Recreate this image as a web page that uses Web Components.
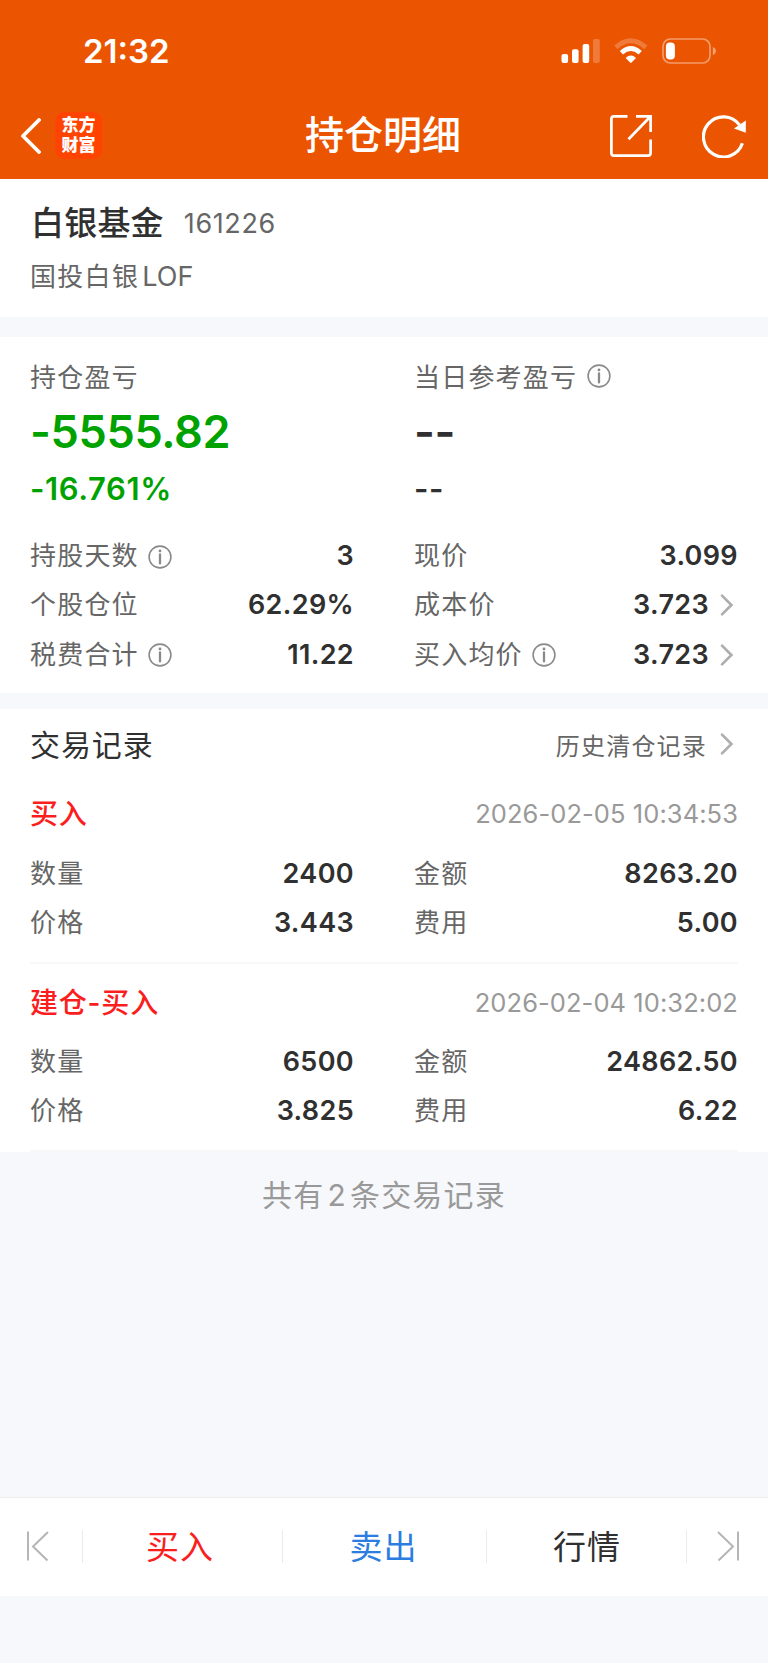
<!DOCTYPE html>
<html lang="zh-CN">
<head>
<meta charset="utf-8">
<title>持仓明细</title>
<style>
    html, body {
        margin: 0;
        height: 100%;
    }

    body {
        background: #f6f8fb;
        color: #303030;
        font-family: Inter, "Noto Sans CJK SC", sans-serif;
        overflow: hidden;
    }
</style>
</head>
<body>
<position-page></position-page>

<script>
class StatusBar extends HTMLElement {
    constructor() {
        super();
        this.attachShadow({ mode: 'open' });
    }

    connectedCallback() {
        this.shadowRoot.innerHTML = `
            <style>
                :host {
                    display: flex;
                    align-items: center;
                    justify-content: space-between;
                    height: 102px;
                    padding: 0 51px 0 83px;
                    color: #fff;
                }

                .time {
                    font-size: 33px;
                    font-weight: 600;
                }

                svg { display: block; }
            </style>
            <span class="time"><slot></slot></span>
            <svg width="156" height="30" viewBox="0 0 156 30" fill="#fff">
                <rect x="0.5" y="18" width="6.6" height="9" rx="2"/>
                <rect x="11" y="13.3" width="6.6" height="13.7" rx="2"/>
                <rect x="21.6" y="8" width="6.6" height="19" rx="2"/>
                <rect x="32" y="3" width="6.8" height="24" rx="2" opacity=".22"/>
                <path d="M54.8 11.4Q69.8 -1.8 84.8 11.4" fill="none" stroke="#fff" stroke-width="4.8" opacity=".22"/>
                <path d="M60.4 16.8Q69.8 8.4 79.2 16.8" fill="none" stroke="#fff" stroke-width="4.8"/>
                <path d="M64.6 22Q69.8 17.2 75 22L70.5 26.6Q69.8 27.3 69.1 26.6Z"/>
                <rect x="102" y="3" width="47" height="24" rx="7.5" fill="none" stroke="#fff" stroke-width="1.7" opacity=".42"/>
                <rect x="104.9" y="6.6" width="9" height="17" rx="4"/>
                <path d="M151.8 11Q154.9 12 154.9 15T151.8 19Z" opacity=".42"/>
            </svg>
        `;
    }
}

class NavBar extends HTMLElement {
    constructor() {
        super();
        this.attachShadow({ mode: 'open' });
    }

    connectedCallback() {
        this.shadowRoot.innerHTML = `
            <style>
                :host {
                    display: grid;
                    grid-template-columns: 1fr auto 1fr;
                    align-items: center;
                    height: 65px;
                    padding: 0 22px 8px 20px;
                    color: #fff;
                }

                .left {
                    display: flex;
                    align-items: center;
                    gap: 14px;
                    padding-top: 2px;
                }

                .logo {
                    display: flex;
                    flex-direction: column;
                    align-items: center;
                    justify-content: center;
                    width: 47px;
                    height: 47px;
                    border-radius: 9px;
                    background: #ff4300;
                    font-size: 17px;
                    font-weight: 900;
                    line-height: 19.5px;
                }

                h1 {
                    margin: 0;
                    font-size: 39px;
                    font-weight: 500;
                    line-height: 60px;
                }

                .right {
                    display: flex;
                    justify-content: flex-end;
                    gap: 49px;
                    padding-top: 3px;
                }

                svg { display: block; }
            </style>
            <div class="left">
                <svg width="21" height="36" viewBox="0 0 21 36" fill="none" stroke="#fff" stroke-width="3.8">
                    <path d="M19 2L3 18L19 34" stroke-linecap="round" stroke-linejoin="round"/>
                </svg>
                <div class="logo"><span>东方</span><span>财富</span></div>
            </div>
            <h1><slot></slot></h1>
            <div class="right">
                <svg width="44" height="44" viewBox="0 0 44 44" fill="none" stroke="#fff" stroke-width="2.7">
                    <path d="M18.5 2.4H5Q2.4 2.4 2.4 5V39Q2.4 41.6 5 41.6H39Q41.6 41.6 41.6 39V25.5"/>
                    <path d="M27 2.4H41.6V18M41.2 2.8L19.5 25.2"/>
                </svg>
                <svg width="44" height="44" viewBox="0 0 44 44" fill="none" stroke="#fff" stroke-width="3.2">
                    <path d="M40.4 29.3A20 20 0 1 1 37.5 11"/>
                    <path d="M43.8 6.5V18.8L32 14.4Z" fill="#fff" stroke="none"/>
                </svg>
            </div>
        `;
    }
}

class InfoIcon extends HTMLElement {
    constructor() {
        super();
        this.attachShadow({ mode: 'open' });
    }

    connectedCallback() {
        this.shadowRoot.innerHTML = `
            <style>
                :host { display: inline-flex; }
            </style>
            <svg width="24" height="24" viewBox="0 0 24 24" fill="none" stroke="#8a8a8a">
                <circle cx="12" cy="12" r="10.9" stroke-width="1.6"/>
                <path d="M12 9.4V18.4" stroke-width="2.3" stroke-linecap="round"/>
                <circle cx="12" cy="5.9" r="1.4" fill="#8a8a8a" stroke="none"/>
            </svg>
        `;
    }
}

class ChevronIcon extends HTMLElement {
    constructor() {
        super();
        this.attachShadow({ mode: 'open' });
    }

    connectedCallback() {
        this.shadowRoot.innerHTML = `
            <style>
                :host { display: inline-flex; }
            </style>
            <svg width="14" height="24" viewBox="0 0 14 24" fill="none" stroke="#aeaeae" stroke-width="2.7">
                <path d="M2 2.6L11.4 12L2 21.4" stroke-linecap="round"/>
            </svg>
        `;
    }
}

// label on the left, value on the right; "info" and "link" add their icons
class DataRow extends HTMLElement {
    constructor() {
        super();
        this.attachShadow({ mode: 'open' });
    }

    connectedCallback() {
        const info = this.hasAttribute('info') ? '<info-icon></info-icon>' : '';
        const link = this.hasAttribute('link') ? '<chevron-icon></chevron-icon>' : '';
        this.shadowRoot.innerHTML = `
            <style>
                :host {
                    display: flex;
                    align-items: center;
                    justify-content: space-between;
                    height: 49.3px;
                    line-height: 40px;
                }

                .label, .value {
                    display: flex;
                    align-items: center;
                }

                .label {
                    gap: 9px;
                    color: #666;
                    font-size: 26px;
                    font-weight: 400;
                    letter-spacing: 1.2px;
                }

                .value {
                    font-size: 27px;
                    font-weight: 600;
                    letter-spacing: 0.35px;
                }

                info-icon { padding-top: 1px; }

                chevron-icon { margin: 0 4px 0 11px; }
            </style>
            <span class="label">${this.getAttribute('label')}${info}</span>
            <span class="value"><slot></slot>${link}</span>
        `;
    }
}

class FundHeader extends HTMLElement {
    constructor() {
        super();
        this.attachShadow({ mode: 'open' });
    }

    connectedCallback() {
        this.shadowRoot.innerHTML = `
            <style>
                :host {
                    display: block;
                    height: 138px;
                    padding: 19px 30px 0 31px;
                    box-sizing: border-box;
                    background: #fff;
                }

                .title {
                    display: flex;
                    align-items: center;
                    gap: 20px;
                    height: 50px;
                }

                .name {
                    font-size: 33px;
                    font-weight: 500;
                    line-height: 50px;
                    letter-spacing: 0.2px;
                }

                .code {
                    color: #666;
                    font-size: 27px;
                    letter-spacing: 0.6px;
                }

                .full {
                    color: #666;
                    font-size: 26px;
                    letter-spacing: 1.3px;
                    line-height: 40px;
                    margin: 9px 0 0 -1px;
                }

                .latin {
                    margin-left: 3px;
                    font-size: 27px;
                    letter-spacing: 0.1px;
                }
            </style>
            <div class="title">
                <span class="name"><slot name="name"></slot></span>
                <span class="code"><slot name="code"></slot></span>
            </div>
            <div class="full"><slot></slot><span class="latin"><slot name="suffix"></slot></span></div>
        `;
    }
}

class ProfitBlock extends HTMLElement {
    constructor() {
        super();
        this.attachShadow({ mode: 'open' });
    }

    connectedCallback() {
        const info = this.hasAttribute('info') ? '<info-icon></info-icon>' : '';
        this.shadowRoot.innerHTML = `
            <style>
                :host { display: block; }

                :host([down]) .amount, :host([down]) .percent { color: #00a200; }

                .label {
                    display: flex;
                    align-items: center;
                    gap: 10px;
                    height: 40px;
                    color: #666;
                    font-size: 26px;
                    letter-spacing: 1.2px;
                }

                info-icon { padding-top: 2px; }

                .amount {
                    margin-top: 3px;
                    font-size: 45px;
                    font-weight: 600;
                    line-height: 68px;
                    letter-spacing: -0.35px;
                }

                .percent {
                    margin-top: -1px;
                    font-size: 31px;
                    font-weight: 600;
                    line-height: 48px;
                    letter-spacing: 0.6px;
                }
            </style>
            <div class="label">${this.getAttribute('label')}${info}</div>
            <div class="amount"><slot></slot></div>
            <div class="percent"><slot name="percent"></slot></div>
        `;
    }
}

class TradeRecord extends HTMLElement {
    constructor() {
        super();
        this.attachShadow({ mode: 'open' });
    }

    connectedCallback() {
        this.shadowRoot.innerHTML = `
            <style>
                :host {
                    display: block;
                    height: 188.5px;
                    padding-top: 3px;
                    box-sizing: border-box;
                    border-bottom: 2px solid #f8f8f8;
                }

                .head {
                    display: flex;
                    align-items: center;
                    justify-content: space-between;
                    height: 71px;
                }

                .type {
                    padding-bottom: 3px;
                    color: #fa1e1e;
                    font-size: 28px;
                    font-weight: 500;
                    letter-spacing: 0.8px;
                }

                .time {
                    color: #999;
                    font-size: 25.5px;
                    letter-spacing: 0.07px;
                }

                .rows {
                    display: grid;
                    grid-template-columns: 1fr 1fr;
                    column-gap: 60px;
                }
            </style>
            <div class="head">
                <span class="type">${this.getAttribute('type')}</span>
                <span class="time">${this.getAttribute('time')}</span>
            </div>
            <div class="rows"><slot></slot></div>
        `;
    }
}

class TabBar extends HTMLElement {
    constructor() {
        super();
        this.attachShadow({ mode: 'open' });
    }

    connectedCallback() {
        this.shadowRoot.innerHTML = `
            <style>
                :host {
                    display: grid;
                    grid-template-columns: 83px 200px 204px 200px 81px;
                    align-items: center;
                    height: 99px;
                    padding-bottom: 1px;
                    box-sizing: border-box;
                    border-top: 1px solid #eee;
                    background: #fff;
                }

                .cell {
                    display: flex;
                    align-items: center;
                    justify-content: center;
                    height: 33px;
                    border-right: 1px solid #ebebeb;
                    font-size: 33px;
                    letter-spacing: 1px;
                }

                .cell span {
                    padding-bottom: 3px;
                }

                .first { padding-right: 6px; }
                .last { border: none; padding-left: 1px; }
                .buy { color: #fa1e1e; padding-right: 5px; }
                .sell { color: #2b7de1; padding-right: 2px; }
                .quote { padding-left: 1px; }

                svg { display: block; }
            </style>
            <div class="cell first">
                <svg width="24" height="32" viewBox="0 0 24 32" fill="none" stroke="#b5b5b5" stroke-width="2">
                    <path d="M2 1.5V30.5M22 2L7 16.5L21.5 30.5"/>
                </svg>
            </div>
            <div class="cell buy"><span>买入</span></div>
            <div class="cell sell"><span>卖出</span></div>
            <div class="cell quote"><span>行情</span></div>
            <div class="cell last">
                <svg width="24" height="32" viewBox="0 0 24 32" fill="none" stroke="#b5b5b5" stroke-width="2">
                    <path d="M22 1.5V30.5M2 2L17 16.5L2.5 30.5"/>
                </svg>
            </div>
        `;
    }
}

class PositionPage extends HTMLElement {
    constructor() {
        super();
        this.attachShadow({ mode: 'open' });
    }

    connectedCallback() {
        this.shadowRoot.innerHTML = `
            <style>
                :host {
                    display: flex;
                    flex-direction: column;
                    height: 1663px;
                }

                header {
                    height: 179px;
                    background: #eb5502;
                }

                section {
                    box-sizing: border-box;
                    background: #fff;
                    padding: 0 30px;
                }

                .summary {
                    height: 356px;
                    margin: 20px 0 16px;
                    padding-top: 18px;
                }

                .columns {
                    display: grid;
                    grid-template-columns: 1fr 1fr;
                    column-gap: 60px;
                }

                .rows { margin-top: 18.5px; }

                .title {
                    display: flex;
                    align-items: center;
                    justify-content: space-between;
                    height: 66px;
                    padding-top: 6px;
                    box-sizing: border-box;
                }

                h2 {
                    margin: 0;
                    padding-bottom: 4px;
                    font-size: 30px;
                    font-weight: 400;
                    letter-spacing: 0.9px;
                }

                .history {
                    display: flex;
                    align-items: center;
                    gap: 13px;
                    padding: 0 4px 2px 0;
                    color: #666;
                    font-size: 24px;
                    letter-spacing: 1.2px;
                }

                .total {
                    margin-top: 20px;
                    color: #999;
                    font-size: 30px;
                    letter-spacing: 1.2px;
                    line-height: 46px;
                    text-align: center;
                }

                .total span { margin: 0 3px; }

                tab-bar { margin: auto 0 67.5px; }
            </style>
            <header>
                <status-bar>21:32</status-bar>
                <nav-bar>持仓明细</nav-bar>
            </header>
            <fund-header><span slot="name">白银基金</span><span slot="code">161226</span>国投白银<span slot="suffix">LOF</span></fund-header>
            <section class="summary">
                <div class="columns">
                    <profit-block label="持仓盈亏" down>-5555.82<span slot="percent">-16.761%</span></profit-block>
                    <profit-block label="当日参考盈亏" info>--<span slot="percent">--</span></profit-block>
                </div>
                <div class="columns rows">
                    <data-row label="持股天数" info>3</data-row>
                    <data-row label="现价">3.099</data-row>
                    <data-row label="个股仓位">62.29%</data-row>
                    <data-row label="成本价" link>3.723</data-row>
                    <data-row label="税费合计" info>11.22</data-row>
                    <data-row label="买入均价" info link>3.723</data-row>
                </div>
            </section>
            <section class="records">
                <div class="title">
                    <h2>交易记录</h2>
                    <span class="history">历史清仓记录<chevron-icon></chevron-icon></span>
                </div>
                <trade-record type="买入" time="2026-02-05 10:34:53">
                    <data-row label="数量">2400</data-row>
                    <data-row label="金额">8263.20</data-row>
                    <data-row label="价格">3.443</data-row>
                    <data-row label="费用">5.00</data-row>
                </trade-record>
                <trade-record type="建仓-买入" time="2026-02-04 10:32:02">
                    <data-row label="数量">6500</data-row>
                    <data-row label="金额">24862.50</data-row>
                    <data-row label="价格">3.825</data-row>
                    <data-row label="费用">6.22</data-row>
                </trade-record>
            </section>
            <div class="total">共有<span>2</span>条交易记录</div>
            <tab-bar></tab-bar>
        `;
    }
}

customElements.define('status-bar', StatusBar);
customElements.define('nav-bar', NavBar);
customElements.define('info-icon', InfoIcon);
customElements.define('chevron-icon', ChevronIcon);
customElements.define('data-row', DataRow);
customElements.define('fund-header', FundHeader);
customElements.define('profit-block', ProfitBlock);
customElements.define('trade-record', TradeRecord);
customElements.define('tab-bar', TabBar);
customElements.define('position-page', PositionPage);
</script>
</body>
</html>
